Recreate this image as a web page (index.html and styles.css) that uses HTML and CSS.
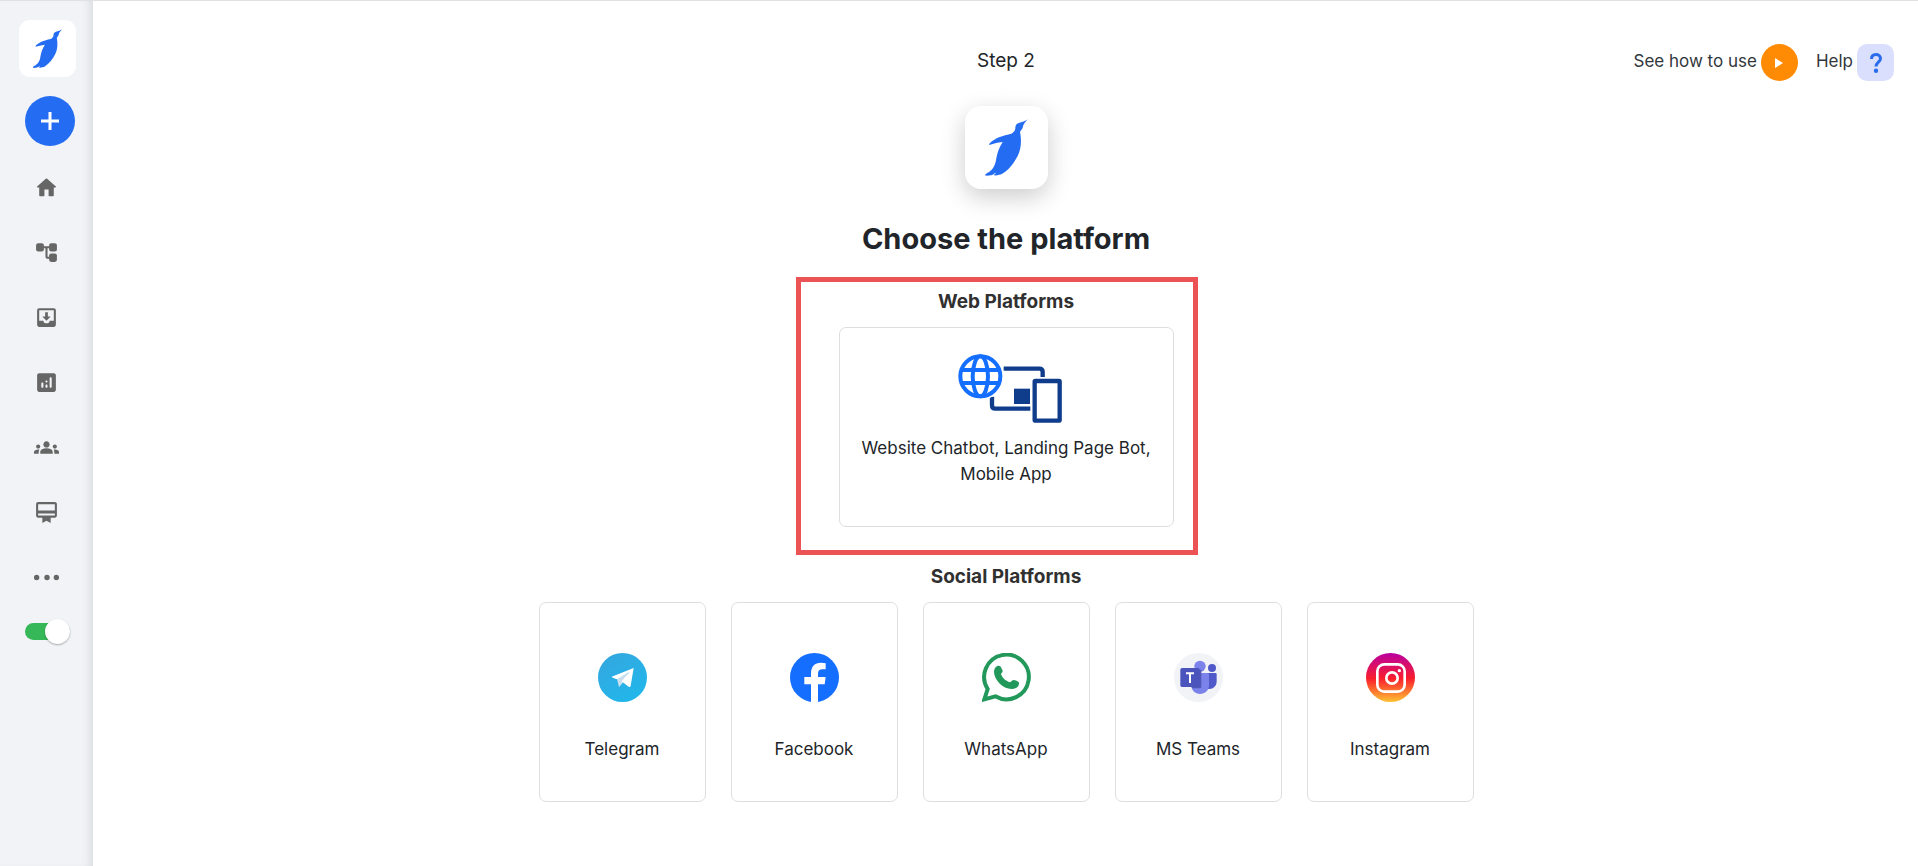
FILE: index.html
```html
<!DOCTYPE html>
<html lang="en">
<head>
<meta charset="utf-8">
<meta name="viewport" content="width=device-width, initial-scale=1">
<title>Choose the platform</title>
<link rel="stylesheet" href="styles.css">
</head>
<body>
<svg class="defs" aria-hidden="true">
  <symbol id="penguin" viewBox="375 258 249 249">
    <path fill="#246df3" d="M564 298C556 304 546 306 536 309C527 312 526 318 526 325C525 332 522 337 514 341C500 344 478 349 463 359C454 364 447 370 447 375C458 372 472 368 488 366C477 384 472 398 469 415C467 430 463 441 455 449C449 456 435 461 435 466C440 469 447 466 453 466C458 466 463 459 468 458C467 462 461 463 461 466C470 467 481 465 489 460C508 448 522 429 533 408C544 386 545 360 540 335C544 331 548 326 549 319C551 311 556 306 564 298Z"/>
  </symbol>
</svg>
<div class="app">
  <aside class="sidebar">
    <a class="tile tile-small" href="#" aria-label="Dashboard"><svg><use href="#penguin"/></svg></a>
    <button class="add" type="button" aria-label="Create bot"><svg viewBox="0 0 18 18"><path d="M9 0v18M0 9h18" stroke="#fff" stroke-width="3"/></svg></button>
    <nav class="nav" aria-label="Main">
      <a href="#" aria-label="Home"><svg viewBox="0 0 24 24"><path d="M10 19.5v-5.500h4v5.500c0 .6.4 1 1 1h3c.6 0 1-.4 1-1V12h1.700c.5 0 .7-.6.3-.9l-8.400-7.500a1 1 0 0 0-1.300 0L3 11.100c-.3.3-.2.9.3.900H5v7.500c0 .6.400 1 1 1h3c.600 0 1-.400 1-1z"/></svg></a>
      <a href="#" aria-label="Flows"><svg viewBox="0 0 24 24"><rect x="2" y="3" width="7.500" height="8" rx="2"/><rect x="14.500" y="3" width="7.500" height="8" rx="2"/><rect x="14.500" y="13" width="7.500" height="8" rx="2"/><path d="M9 7h6M12 7v8.500c0 1 .5 1.500 1.500 1.500H15" fill="none" stroke="#666" stroke-width="2"/></svg></a>
      <a href="#" aria-label="Inbox"><svg viewBox="0 0 24 24"><path d="M16 11h-2.700V7h-2.600v4H8l4 4 4-4zm3-8H4.990C3.880 3 3 3.900 3 5v14c0 1.100.880 2 1.990 2H19c1.100 0 2-.900 2-2V5c0-1.100-.900-2-2-2zm0 12h-4c0 1.660-1.350 2.600-3 2.600s-3-.940-3-2.600H4.990V5H19v10z"/></svg></a>
      <a href="#" aria-label="Analytics"><svg viewBox="0 0 24 24"><path fill-rule="evenodd" d="M19 3H5c-1.100 0-2 .900-2 2v14c0 1.100.900 2 2 2h14c1.100 0 2-.900 2-2V5c0-1.100-.900-2-2-2zM8 17c-.550 0-1-.450-1-1v-3c0-.550.450-1 1-1s1 .450 1 1v3c0 .550-.450 1-1 1zm4 0c-.550 0-1-.450-1-1v-1c0-.550.450-1 1-1s1 .450 1 1v1c0 .550-.450 1-1 1zm0-5c-.550 0-1-.450-1-1s.450-1 1-1 1 .450 1 1-.450 1-1 1zm4 5c-.550 0-1-.450-1-1V8c0-.550.450-1 1-1s1 .450 1 1v8c0 .550-.450 1-1 1z"/></svg></a>
      <a href="#" aria-label="Team"><svg viewBox="0 0 24 24"><path d="M12 12.750c1.630 0 3.070.390 4.240.900 1.080.480 1.760 1.560 1.760 2.730V18H6v-1.610c0-1.180.680-2.260 1.760-2.730 1.170-.520 2.610-.910 4.240-.910zM4 13c1.100 0 2-.900 2-2s-.900-2-2-2-2 .900-2 2 .900 2 2 2zm1.130 1.100C4.760 14.040 4.390 14 4 14c-.990 0-1.930.210-2.780.580A2.010 2.010 0 0 0 0 16.430V18h4.500v-1.610c0-.830.230-1.610.630-2.290zM20 13c1.100 0 2-.900 2-2s-.900-2-2-2-2 .900-2 2 .900 2 2 2zm4 3.430c0-.810-.480-1.530-1.220-1.850A6.950 6.950 0 0 0 20 14c-.390 0-.760.040-1.130.100.400.680.630 1.460.630 2.290V18H24v-1.570zM12 6c1.660 0 3 1.340 3 3s-1.340 3-3 3-3-1.340-3-3 1.340-3 3-3z"/></svg></a>
      <a href="#" aria-label="Membership"><svg viewBox="0 0 24 24"><path d="M20 2H4c-1.110 0-2 .890-2 2v11c0 1.110.890 2 2 2h4v5l4-2 4 2v-5h4c1.110 0 2-.890 2-2V4c0-1.110-.890-2-2-2zm0 13H4v-2h16v2zm0-5H4V4h16v6z"/></svg></a>
      <a href="#" aria-label="More"><svg viewBox="0 0 24 24"><circle cx="2.500" cy="12" r="2.600"/><circle cx="12.500" cy="12" r="2.600"/><circle cx="21.500" cy="12" r="2.600"/></svg></a>
    </nav>
    <input class="switch" type="checkbox" role="switch" aria-label="Bot active" checked>
  </aside>

  <main class="main">
    <header class="header">
      <p class="step">Step 2</p>
      <div class="actions">
        <div class="action">
          <label for="watch">See how to use</label>
          <button class="play" id="watch" type="button" aria-label="See how to use"><svg viewBox="0 0 8 10"><path d="M0 0l8 5-8 5z" fill="#fff"/></svg></button>
        </div>
        <div class="action">
          <label for="help">Help</label>
          <button class="help" id="help" type="button" aria-label="Help"><svg viewBox="0 0 12 20"><path d="M1.500 6C1.500 3 3.500 1.500 6 1.500S10.500 3 10.500 5.500C10.500 9 6 9.500 6 13.500" fill="none" stroke="#2b6cea" stroke-width="3"/><circle cx="6" cy="17.800" r="2.200" fill="#2b6cea"/></svg></button>
        </div>
      </div>
    </header>

    <div class="tile tile-large"><svg><use href="#penguin"/></svg></div>
    <h1 class="title">Choose the platform</h1>

    <section class="web">
      <h2 class="subtitle">Web Platforms</h2>
      <button class="card card-web" type="button">
        <svg class="devices" viewBox="84 42 312 207">
          <g fill="none" stroke="#103c8c" stroke-width="13">
            <path d="M221 86H328Q338 86 338 96V111"/>
            <path d="M186 170V196Q186 206 196 206H301"/>
            <rect x="314" y="123" width="75" height="119" rx="2"/>
          </g>
          <rect x="252" y="146" width="48" height="46" fill="#103c8c"/>
          <circle cx="151" cy="109" r="71" fill="#fff"/>
          <g fill="none" stroke="#146eff" stroke-width="12">
            <circle cx="151" cy="109" r="60"/>
            <path d="M95 90H207M95 129H207"/>
            <ellipse cx="151" cy="109" rx="23" ry="60"/>
          </g>
        </svg>
        <span class="label">Website Chatbot, Landing Page Bot, Mobile App</span>
      </button>
      <div class="highlight"></div>
    </section>

    <section class="social">
      <h2 class="subtitle">Social Platforms</h2>
      <div class="cards">
        <button class="card" type="button">
          <svg class="logo" viewBox="204 279 147 147">
            <defs><linearGradient id="tg" x1="0" y1="0" x2=".6" y2="1"><stop offset="0" stop-color="#35a6de"/><stop offset="1" stop-color="#22b6ea"/></linearGradient></defs>
            <circle cx="277.500" cy="352.500" r="73.500" fill="url(#tg)"/>
            <path d="M261 356L267 382L280 366L300 337Z" fill="#c9dfef"/>
            <path d="M311 324L245 350Q245 352 261 358L299 336L276 362Q275 365 278 367L297 381Q301 382 302 377Z" fill="#fff"/>
          </svg>
          <span class="label">Telegram</span>
        </button>
        <button class="card" type="button">
          <svg class="logo" viewBox="780 279 147 147">
            <circle cx="853.500" cy="352.500" r="73.500" fill="#146eff"/>
            <path d="M843 426V373H823V351H843V341C843 319 854 308 873 308Q881 308 887 310V328H877Q864 328 864 341V351H887L884 373H864V426Z" fill="#fff"/>
          </svg>
          <span class="label">Facebook</span>
        </button>
        <button class="card" type="button">
          <svg class="logo" viewBox="246 189 147 147">
            <path d="M253 328L263 297A67 67 0 1 1 286 319Z" fill="none" stroke="#22985a" stroke-width="12"/>
            <path d="M291 229C296 226 302 228 304 234L308 242C309 247 303 249 303 253C308 265 317 273 327 276C333 279 336 270 341 270C347 271 355 274 357 278C358 290 347 297 336 297C309 298 283 270 282 246C282 238 286 231 291 229Z" fill="#22985a"/>
          </svg>
          <span class="label">WhatsApp</span>
        </button>
        <button class="card" type="button">
          <svg class="logo" viewBox="222 189 147 147">
            <circle cx="295.500" cy="262.500" r="73.500" fill="#f1f3f6"/>
            <circle cx="336" cy="234" r="12" fill="#5059c9"/>
            <path d="M320 249H346Q350 249 350 253V274C350 288 340 297 328 297H320Z" fill="#5059c9"/>
            <circle cx="300" cy="229" r="17" fill="#7b83eb"/>
            <path d="M274 249H323Q327 249 327 253V286C327 301 315 312 300 312S274 301 274 286Z" fill="#7b83eb"/>
            <path d="M274 239H304V290Q304 295 299 295H276Q274 291 274 286Z" fill="#5159b8"/>
            <rect x="241" y="234" width="58" height="57" rx="5" fill="#4b53bc"/>
            <path d="M258 250H282M270 250V279" stroke="#fff" stroke-width="6"/>
          </svg>
          <span class="label">MS Teams</span>
        </button>
        <button class="card" type="button">
          <svg class="logo" viewBox="798 189 147 147">
            <defs><linearGradient id="ig" x1="0" y1="0" x2="0" y2="1"><stop offset="0" stop-color="#b900a0"/><stop offset=".52" stop-color="#fa1e2d"/><stop offset="1" stop-color="#ffc233"/></linearGradient></defs>
            <circle cx="871.500" cy="262.500" r="73.500" fill="url(#ig)"/>
            <rect x="832" y="223" width="82" height="82" rx="21" fill="none" stroke="#fff" stroke-width="8"/>
            <circle cx="876" cy="264" r="17" fill="none" stroke="#fff" stroke-width="8"/>
            <circle cx="898" cy="242" r="5" fill="#fff"/>
          </svg>
          <span class="label">Instagram</span>
        </button>
      </div>
    </section>
  </main>
</div>
</body>
</html>
```
FILE: styles.css
```css
* { box-sizing: border-box; }

body {
  margin: 0;
  background: #fff;
  color: #212529;
  font-family: Inter, "Liberation Sans", sans-serif;
  font-size: 17px;
  line-height: 26px;
}

h1, h2, p { margin: 0; }

button {
  padding: 0;
  border: 0;
  color: inherit;
  font: inherit;
  cursor: pointer;
}

.defs { position: absolute; width: 0; height: 0; }

.app {
  display: grid;
  grid-template-columns: 93px 1fr;
  column-gap: 1px;
  min-height: 100vh;
  border-top: 1px solid #dfe0e1;
}

.sidebar {
  display: flex;
  flex-direction: column;
  align-items: flex-start;
  padding-top: 19px;
  background: #f1f3f6;
  box-shadow: inset -9px 0 8px -6px #d9dcde;
}

.tile { display: block; background: #fff; }
.tile svg { display: block; width: 100%; height: 100%; }
.tile-small { width: 57px; height: 57px; margin-left: 19px; border-radius: 11px; }
.tile-large {
  width: 83px;
  height: 83px;
  margin-top: 25px;
  border-radius: 16px;
  box-shadow: 0 8px 24px rgba(0, 0, 0, .2);
}

.add {
  display: grid;
  place-items: center;
  width: 50px;
  height: 50px;
  margin: 19px 0 0 25px;
  border-radius: 50%;
  background: #246df3;
}
.add svg { width: 18px; height: 18px; }

.nav { display: flex; flex-direction: column; width: 100%; margin-top: 9px; }
.nav a { display: grid; place-items: center; height: 65px; }
.nav svg { width: 25px; height: 25px; fill: #666; }

.switch {
  appearance: none;
  display: flex;
  align-items: center;
  width: 45px;
  height: 17px;
  margin: 13px 0 0 25px;
  border-radius: 9px;
  background: #37b858;
}
.switch::before {
  content: "";
  width: 25px;
  height: 25px;
  margin-left: auto;
  flex: none;
  border-radius: 50%;
  background: #fff;
  box-shadow: 0 1px 2px rgba(0, 0, 0, .3);
}

.main {
  display: flex;
  flex-direction: column;
  align-items: center;
  padding-top: 43px;
  padding-bottom: 40px;
}

.header {
  display: grid;
  grid-template-columns: 1fr auto 1fr;
  width: 100%;
  padding: 0 24px;
}
.step { grid-column: 2; font-size: 19px; line-height: 34px; }
.actions { display: flex; justify-content: flex-end; gap: 18px; color: #32373c; }
.action { display: flex; align-items: flex-start; gap: 4px; line-height: 34px; }
.play, .help { display: grid; place-items: center; width: 37px; height: 37px; }
.play { border-radius: 50%; background: #ff8b05; }
.play svg { width: 8px; height: 10px; }
.help { border-radius: 10px; background: #dbdffe; }
.help svg { width: 12px; height: 20px; }

.title { margin-top: 30px; font-size: 29px; line-height: 40px; font-weight: 700; }
.subtitle { color: #303030; font-size: 19px; line-height: 28px; font-weight: 700; text-align: center; }

.web { position: relative; margin-top: 29px; }
.highlight {
  position: absolute;
  inset: -11px -24px -28px -43px;
  border: 5px solid #eb5355;
  pointer-events: none;
}

.card {
  display: flex;
  flex-direction: column;
  align-items: center;
  justify-content: center;
  gap: 34px;
  width: 167px;
  min-height: 200px;
  padding-top: 10px;
  border: 1px solid #dedede;
  border-radius: 7px;
  background: #fff;
}
.card-web { width: 335px; justify-content: flex-start; gap: 12px; margin-top: 11px; padding: 26px 16px 0; }
.devices { width: 104px; height: 69px; margin-left: 8px; }
.logo { width: 49px; height: 49px; }

.social { margin-top: 36px; }
.cards { display: flex; flex-wrap: wrap; justify-content: center; gap: 25px; margin-top: 11px; }
```
